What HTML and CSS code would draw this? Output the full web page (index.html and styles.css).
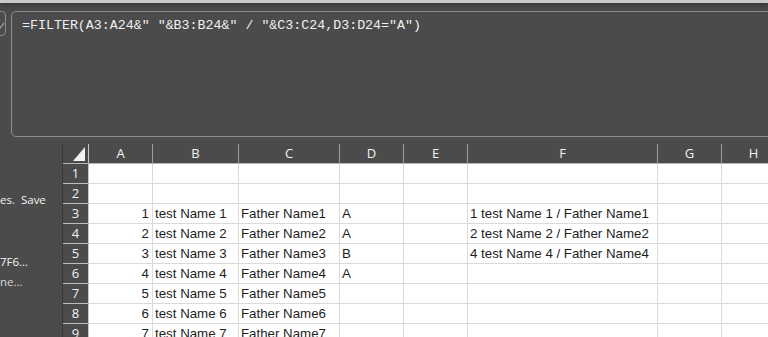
FILE: index.html
```html
<!DOCTYPE html>
<html lang="en">
<head>
  <meta charset="UTF-8">
  <title>FILTER sheet</title>
  <link rel="stylesheet" href="styles.css">
</head>
<body>
  <div class="topbar"></div>

  <div class="formula-row">
    <div class="fx-btn">
      <svg width="20" height="25" viewBox="0 0 20 25">
        <path d="M9 17 L12 20 L18 12" fill="none" stroke="#9a9a9a" stroke-width="1.3"/>
      </svg>
    </div>
    <div class="formula">=FILTER(A3:A24&amp;" "&amp;B3:B24&amp;" / "&amp;C3:C24,D3:D24="A")</div>
  </div>

  <div class="main">
    <div class="side">
      <p class="note">es.&nbsp; Save</p>
      <p class="note second">7F6…</p>
      <p class="note dim">ne…</p>
    </div>

    <div class="sheet">
      <div class="row">
        <div class="cell corner">
          <svg width="25" height="19" viewBox="0 0 25 19">
            <polygon points="10,17 22,17 22,3" fill="#f2f2f2"/>
          </svg>
        </div>
        <div class="cell ch">A</div>
        <div class="cell ch">B</div>
        <div class="cell ch">C</div>
        <div class="cell ch">D</div>
        <div class="cell ch">E</div>
        <div class="cell ch">F</div>
        <div class="cell ch">G</div>
        <div class="cell ch">H</div>
      </div>

      <div class="row">
        <div class="cell rh">1</div>
        <div class="cell"></div><div class="cell"></div><div class="cell"></div><div class="cell"></div>
        <div class="cell"></div><div class="cell"></div><div class="cell"></div><div class="cell"></div>
      </div>

      <div class="row">
        <div class="cell rh">2</div>
        <div class="cell"></div><div class="cell"></div><div class="cell"></div><div class="cell"></div>
        <div class="cell"></div><div class="cell"></div><div class="cell"></div><div class="cell"></div>
      </div>

      <div class="row">
        <div class="cell rh">3</div>
        <div class="cell num">1</div>
        <div class="cell">test Name 1</div>
        <div class="cell">Father Name1</div>
        <div class="cell">A</div>
        <div class="cell"></div>
        <div class="cell">1 test Name 1 / Father Name1</div>
        <div class="cell"></div><div class="cell"></div>
      </div>

      <div class="row">
        <div class="cell rh">4</div>
        <div class="cell num">2</div>
        <div class="cell">test Name 2</div>
        <div class="cell">Father Name2</div>
        <div class="cell">A</div>
        <div class="cell"></div>
        <div class="cell">2 test Name 2 / Father Name2</div>
        <div class="cell"></div><div class="cell"></div>
      </div>

      <div class="row">
        <div class="cell rh">5</div>
        <div class="cell num">3</div>
        <div class="cell">test Name 3</div>
        <div class="cell">Father Name3</div>
        <div class="cell">B</div>
        <div class="cell"></div>
        <div class="cell">4 test Name 4 / Father Name4</div>
        <div class="cell"></div><div class="cell"></div>
      </div>

      <div class="row">
        <div class="cell rh">6</div>
        <div class="cell num">4</div>
        <div class="cell">test Name 4</div>
        <div class="cell">Father Name4</div>
        <div class="cell">A</div>
        <div class="cell"></div><div class="cell"></div><div class="cell"></div><div class="cell"></div>
      </div>

      <div class="row">
        <div class="cell rh">7</div>
        <div class="cell num">5</div>
        <div class="cell">test Name 5</div>
        <div class="cell">Father Name5</div>
        <div class="cell"></div><div class="cell"></div><div class="cell"></div><div class="cell"></div><div class="cell"></div>
      </div>

      <div class="row">
        <div class="cell rh">8</div>
        <div class="cell num">6</div>
        <div class="cell">test Name 6</div>
        <div class="cell">Father Name6</div>
        <div class="cell"></div><div class="cell"></div><div class="cell"></div><div class="cell"></div><div class="cell"></div>
      </div>

      <div class="row">
        <div class="cell rh">9</div>
        <div class="cell num">7</div>
        <div class="cell">test Name 7</div>
        <div class="cell">Father Name7</div>
        <div class="cell"></div><div class="cell"></div><div class="cell"></div><div class="cell"></div><div class="cell"></div>
      </div>
    </div>
  </div>
</body>
</html>
```

FILE: styles.css
```css
body {
  margin: 0;
  height: 337px;
  overflow: hidden;
  background: #4b4b4b;
  font-family: 'Liberation Sans', Arial, sans-serif;
}

.topbar {
  position: relative;
  height: 3px;
  background: #c9c9c9;
  box-shadow: 0 1px 6px rgba(0, 0, 0, 0.55);
}

.formula-row {
  display: flex;
  padding-top: 8px;
  margin-right: -20px;
}

.fx-btn {
  flex: none;
  width: 20px;
  height: 25px;
  margin-left: -14px;
  box-sizing: border-box;
  border: 1px solid #8c8c8c;
  border-radius: 4px;
  overflow: hidden;
}

.fx-btn svg {
  display: block;
  margin: -1px 0 0 -1px;
}

.formula {
  flex: 1;
  height: 126px;
  margin-left: 5px;
  box-sizing: border-box;
  border: 1px solid #8c8c8c;
  border-radius: 5px;
  padding: 5px 10px;
  font-family: 'Liberation Mono', 'DejaVu Sans Mono', monospace;
  font-size: 13.3px;
  line-height: 17px;
  color: #f0f0f0;
  white-space: pre;
}

.main {
  display: flex;
  margin-top: 7px;
  overflow: hidden;
}

.side {
  flex: none;
  width: 62px;
  height: 200px;
  border-right: 1px solid #3a3a3a;
  padding-top: 46px;
  font-family: 'Open Sans', sans-serif;
  font-size: 11.5px;
  line-height: 20px;
  color: #f4f4f4;
  white-space: nowrap;
  overflow: hidden;
}

.note {
  margin: 0;
}

.note.second {
  margin-top: 42px;
}

.note.dim {
  color: #d6d6d6;
}

.sheet {
  flex: none;
}

.row {
  display: grid;
  grid-template-columns: 26px 64px 86px 101px 64px 64px 190px 64px 64px;
  height: 20px;
}

.cell {
  box-sizing: border-box;
  height: 20px;
  border-right: 1px solid #dadada;
  border-bottom: 1px solid #dadada;
  background: #fff;
  padding: 1px 2px 0;
  font-size: 13.3px;
  line-height: 18px;
  color: #1e1e1e;
  white-space: nowrap;
  overflow: hidden;
}

.cell.num {
  text-align: right;
  padding-right: 3px;
}

.cell.rh,
.cell.ch,
.cell.corner {
  background: #4b4b4b;
  padding: 0;
  font-family: 'Open Sans', sans-serif;
  font-size: 13px;
  line-height: 19px;
  text-align: center;
  color: #f2f2f2;
}

.cell.rh {
  border-right-color: #c4c4c4;
  border-bottom-color: #bcbcbc;
}

.cell.ch {
  border-right-color: #9c9c9c;
  border-bottom-color: #b4b4b4;
}

.cell.corner {
  border-right-color: #c4c4c4;
  border-bottom-color: #b4b4b4;
}

.corner svg {
  display: block;
}
```
